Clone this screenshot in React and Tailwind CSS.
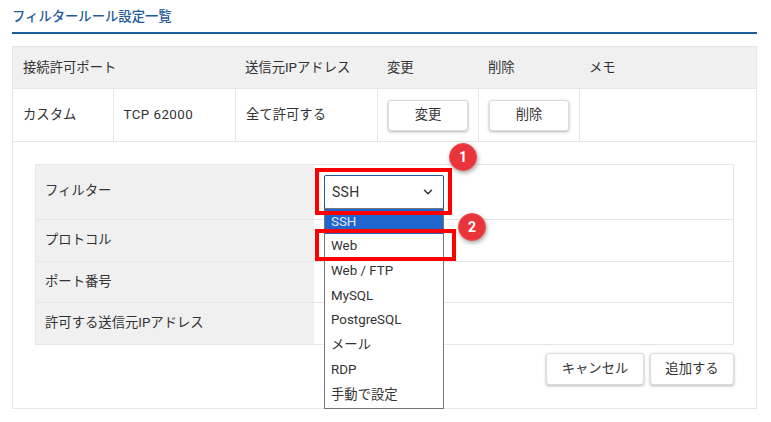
import React from 'react';
import { ChevronDown } from 'lucide-react';

const font = { fontFamily: 'Roboto, "Noto Sans CJK JP", sans-serif' };

const options = ['SSH', 'Web', 'Web / FTP', 'MySQL', 'PostgreSQL', 'メール', 'RDP', '手動で設定'];

function ActionButton({ className, children }) {
    return (
        <button className={`flex items-center justify-center rounded-[3px] border border-[#dcdcdc] bg-white text-[13.33px] text-[#333] shadow-[0_1px_3px_rgba(0,0,0,0.3)] ${className}`}>
            {children}
        </button>
    );
}

function FormRow({ label, className, labelClass = '', last }) {
    return (
        <div className={`flex ${last ? '' : 'border-b border-[#e6e6e6]'} ${className}`}>
            <div className={`flex w-[278px] shrink-0 items-center bg-[#f0f0f0] pl-[9px] text-[13.33px] text-[#333] ${labelClass}`}>{label}</div>
            <div className="flex-1" />
        </div>
    );
}

function Badge({ className, children }) {
    return (
        <div className={`absolute flex h-[28px] w-[28px] items-center justify-center rounded-full border border-[#f04a4a] bg-[#e8343a] text-[14px] font-bold text-white shadow-[1px_2px_4px_rgba(0,0,0,0.35)] ${className}`}>
            {children}
        </div>
    );
}

export default function App() {
    return (
        <div className="relative h-[422px] w-[771px] overflow-hidden bg-white pl-[12px] pr-[14px] pt-[8px]" style={font}>
            <div className="flex h-[26px] items-start border-b-2 border-[#1f5c9e] text-[13.33px] font-medium leading-[18px] text-[#1f5c9e]">
                フィルタールール設定一覧
            </div>

            <div className="mt-[12px] h-[363px] border border-[#e6e6e6] text-[13.33px] text-[#333]">
                {/* Header row */}
                <div className="flex h-[42px] items-center border-b border-[#e6e6e6] bg-[#f0f0f0]">
                    <div className="w-[222px] pl-[10px]">接続許可ポート</div>
                    <div className="w-[142px] pl-[10px]">送信元IPアドレス</div>
                    <div className="w-[101px] pl-[10px]">変更</div>
                    <div className="w-[101px] pl-[10px]">削除</div>
                    <div className="flex-1 pl-[10px]">メモ</div>
                </div>

                {/* Data row */}
                <div className="flex h-[53px] border-b border-[#e6e6e6]">
                    <div className="flex w-[101px] items-center border-r border-[#e6e6e6] pl-[10px]">カスタム</div>
                    <div className="flex w-[122px] items-center border-r border-[#e6e6e6] pl-[9.5px] tracking-[0.45px]">TCP 62000</div>
                    <div className="flex w-[142px] items-center border-r border-[#e6e6e6] pl-[10px]">全て許可する</div>
                    <div className="flex w-[101px] items-center border-r border-[#e6e6e6] pl-[10px]">
                        <ActionButton className="h-[31px] w-[80px]">変更</ActionButton>
                    </div>
                    <div className="flex w-[101px] items-center border-r border-[#e6e6e6] pl-[10px]">
                        <ActionButton className="h-[31px] w-[80px]">削除</ActionButton>
                    </div>
                    <div className="flex-1" />
                </div>

                {/* Add form */}
                <div className="px-[22px] pt-[22px]">
                    <div className="border border-[#e6e6e6]">
                        <FormRow label="フィルター" className="h-[55px]" labelClass="pb-[3px]" />
                        <FormRow label="プロトコル" className="h-[42px]" labelClass="pb-[2px]" />
                        <FormRow label="ポート番号" className="h-[41px]" labelClass="pb-[1px]" />
                        <FormRow label="許可する送信元IPアドレス" className="h-[41px]" labelClass="pb-[2px]" last />
                    </div>
                    <div className="mt-[8px] flex justify-end gap-[6px]">
                        <ActionButton className="h-[32px] w-[98px]">キャンセル</ActionButton>
                        <ActionButton className="h-[32px] w-[84px]">追加する</ActionButton>
                    </div>
                </div>
            </div>

            {/* Open select */}
            <div className="absolute left-[324px] top-[175px] flex h-[34px] w-[120px] items-center justify-between rounded-[2px] border border-[#1f5c9e] bg-white pl-[7px] pr-[8px] text-[14px] text-[#333]">
                <span className="tracking-[0.3px]">SSH</span>
                <ChevronDown size={14} strokeWidth={2.5} />
            </div>
            <div className="absolute left-[324px] top-[208px] h-[201px] w-[120px] border border-[#767676] bg-white text-[13.33px] text-[#333]">
                {options.map((option, i) => (
                    <div key={option} className={`flex h-[24.75px] items-center pl-[6px] ${i === 0 ? 'bg-[#1f66cf] pt-[1px] text-[#e8e8e8]' : ''}`}>
                        {option}
                    </div>
                ))}
            </div>

            {/* Red callouts */}
            <div className="absolute left-[315px] top-[168px] h-[47px] w-[137px] border-4 border-[#ff0000]" />
            <div className="absolute left-[315px] top-[229px] h-[32px] w-[141px] border-4 border-[#ff0000]" />
            <Badge className="left-[449px] top-[143px]">1</Badge>
            <Badge className="left-[458px] top-[213px]">2</Badge>
        </div>
    );
}
